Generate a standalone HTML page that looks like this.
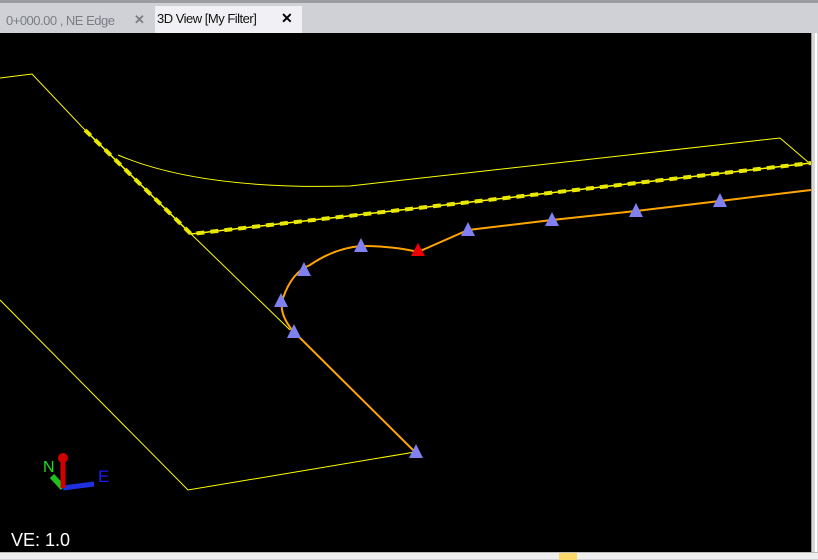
<!DOCTYPE html>
<html><head><meta charset="utf-8"><style>
html,body{margin:0;padding:0;width:818px;height:559px;overflow:hidden;background:#cfd1d6;font-family:"Liberation Sans",sans-serif}
.top{position:absolute;left:0;top:0;width:818px;height:33px;background:#cfd1d6;border-top:3px solid #9a9ca0;box-sizing:border-box}
.t1{position:absolute;left:6px;top:10px;font-size:13px;color:#7a7d85;letter-spacing:-0.5px}
.x1{position:absolute;left:134px;top:9px;font-size:13px;color:#7a7d85;font-weight:bold}
.act{position:absolute;left:155px;top:3px;width:147px;height:27px;background:#f1f1f5}
.t2{position:absolute;left:2px;top:5px;font-size:13px;color:#111;letter-spacing:-0.5px}
.x2{position:absolute;left:126px;top:4px;font-size:14px;color:#000;font-weight:bold}
.view{position:absolute;left:0;top:33px;width:811px;height:519px;background:#000}
.rs{position:absolute;left:811px;top:33px;width:7px;height:519px;background:#d6d6d6;border-left:1px solid #999;box-sizing:border-box}
.rs:after{content:"";position:absolute;left:3px;top:0;width:2px;height:100%;background:#fff}
.bot{position:absolute;left:0;top:552px;width:818px;height:7px;background:#efefef;border-top:1px solid #bbb;box-sizing:border-box}
.ve{position:absolute;left:11px;top:530px;color:#fff;font-size:18px}
</style></head><body>
<div class="top"><span class="t1">0+000.00 , NE Edge</span><span class="x1">✕</span>
<div class="act"><span class="t2">3D View [My Filter]</span><span class="x2">✕</span></div></div>
<div class="view"></div>
<svg style="position:absolute;left:0;top:0" width="818" height="559">
<g fill="none" stroke="#ffff00" stroke-width="1">
<polyline points="0,78 32,74 85,130"/>
<polyline points="191,234 290,330"/>
<polyline points="0,300 188,490 415,452"/>
<path d="M118,155 Q200,190 350,186 L780,138 L808,162"/>
<polyline points="85,130 191,234 811,163" stroke-width="1.5"/>
<polyline points="85,130 191,234 811,163" stroke-width="4" stroke-dasharray="8 6" stroke="#e8e800"/>
</g>
<g fill="none" stroke="#ffa500" stroke-width="2">
<path d="M415,452 L292,330 Q278,312 283,298 Q292,272 310,265 Q335,248 361,246 Q395,246 418,252 L468,230 L552,220 L636,211 L720,201 L811,190"/>
</g>
<g fill="#8080f0">
<polygon points="294,324 287,338 301,338"/>
<polygon points="281,293 274,307 288,307"/>
<polygon points="304,262 297,276 311,276"/>
<polygon points="361,238 354,252 368,252"/>
<polygon points="468,222 461,236 475,236"/>
<polygon points="552,212 545,226 559,226"/>
<polygon points="636,203 629,217 643,217"/>
<polygon points="720,193 713,207 727,207"/>
<polygon points="416,444 409,458 423,458"/>
</g>
<polygon points="418,243 411,256 425,256" fill="#f00000"/>
<g>
<line x1="63" y1="488" x2="52" y2="476" stroke="#20c020" stroke-width="6"/>
<line x1="63" y1="488" x2="94" y2="484" stroke="#2030e0" stroke-width="5"/>
<line x1="63" y1="488" x2="63" y2="460" stroke="#d00000" stroke-width="5"/>
<circle cx="63" cy="458" r="5" fill="#d00000"/>
<text x="43" y="472" fill="#20e020" font-size="16" font-family="Liberation Sans">N</text>
<text x="98" y="482" fill="#1a1aff" font-size="17" font-family="Liberation Sans">E</text>
</g>
</svg>
<div class="rs"></div>
<div class="bot"><div style="position:absolute;left:559px;top:0;width:18px;height:7px;background:#ffd86a"></div></div>
<div class="ve">VE: 1.0</div>
</body></html>
